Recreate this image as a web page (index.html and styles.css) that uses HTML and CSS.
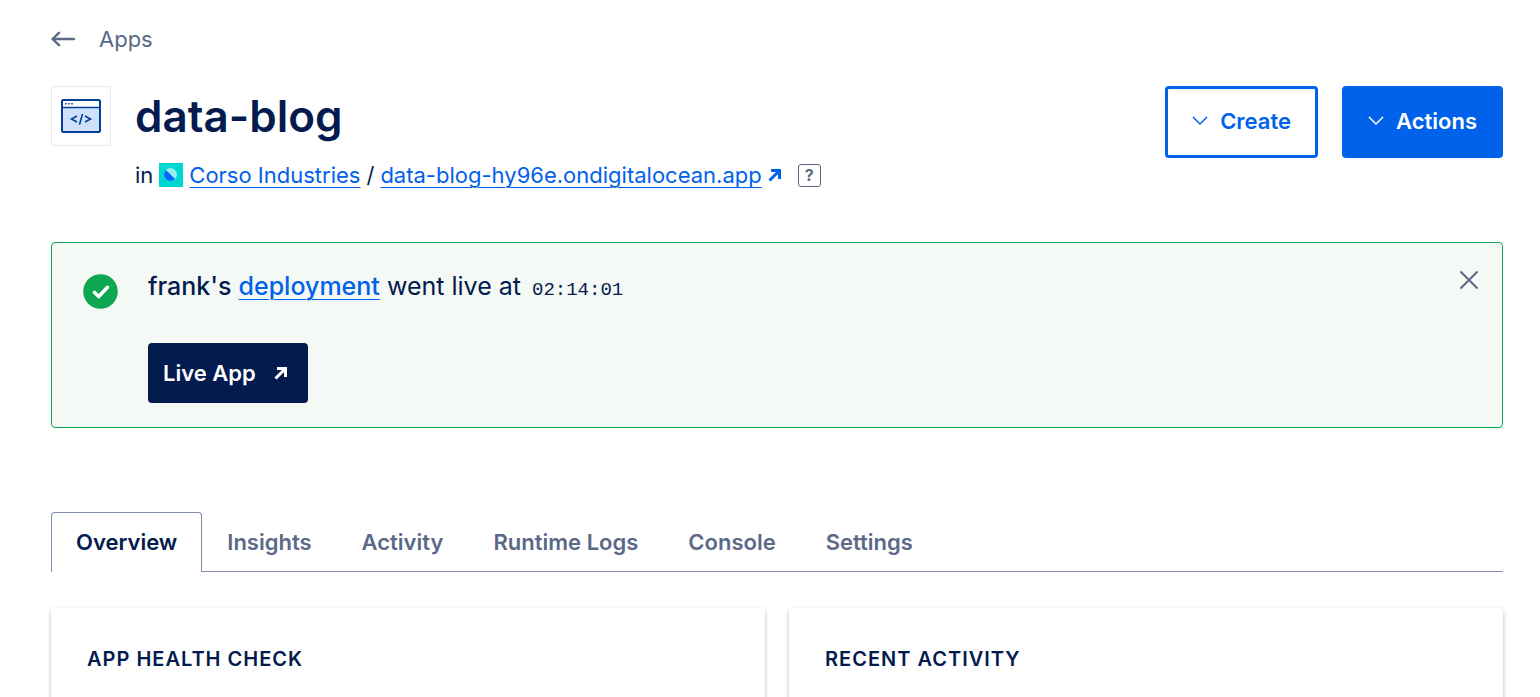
FILE: index.html
```html
<!DOCTYPE html>
<html lang="en">
<head>
<meta charset="utf-8">
<title>data-blog</title>
<link rel="stylesheet" href="styles.css">
</head>
<body>
<div class="page">
  <a class="back" href="#">
    <svg class="back-arrow" viewBox="0 0 24 16" aria-hidden="true"><path d="M23 8H1.500M8 1.800L1.500 8L8 14.200"/></svg>
    <span>Apps</span>
  </a>

  <header class="header">
    <div class="app-icon">
      <svg viewBox="0 0 40 34" aria-hidden="true">
        <rect x="1" y="1" width="38" height="32" rx="1.500" fill="#fff"/>
        <path d="M1 8.500H39V33H1Z" fill="#cfe0fa"/>
        <rect x="1" y="1" width="38" height="32" rx="1.500" fill="none" stroke="#003e9c" stroke-width="2"/>
        <path d="M1 8.500H39" stroke="#003e9c" stroke-width="1.500"/>
        <path d="M4.200 4.700H5.800M7.200 4.700H8.800M10.200 4.700H11.800" stroke="#003e9c" stroke-width="1.400"/>
        <path d="M16 17L10.500 20L16 23M24 17L29.500 20L24 23M21.500 15L18.500 25.500" fill="none" stroke="#003e9c" stroke-width="1.600"/>
      </svg>
    </div>
    <div class="title-block">
      <h1 class="title">data-blog</h1>
      <div class="meta">
        <span>in</span>
        <svg class="project-icon" viewBox="0 0 24 24" aria-hidden="true">
          <rect width="24" height="24" fill="#00d7d2"/>
          <circle cx="11.500" cy="11.500" r="6.500" fill="#99efed"/>
          <path d="M6.900 6.900A6.500 6.500 0 0 0 16.100 16.100Z" fill="#0069ff"/>
        </svg>
        <a class="link" href="#">Corso Industries</a>
        <span>/</span>
        <a class="link" href="#">data-blog-hy96e.ondigitalocean.app</a>
        <svg class="out-arrow" viewBox="0 0 14 14" aria-hidden="true"><path d="M1.500 12.500L11 3M3 2.500H11.500V11"/></svg>
        <button class="help" type="button" aria-label="Help">?</button>
      </div>
    </div>
    <div class="buttons">
      <button class="btn btn-outline" type="button">
        <svg class="chevron" viewBox="0 0 16 10" aria-hidden="true"><path d="M1 1L8 8L15 1"/></svg>Create
      </button>
      <button class="btn btn-primary" type="button">
        <svg class="chevron" viewBox="0 0 16 10" aria-hidden="true"><path d="M1 1L8 8L15 1"/></svg>Actions
      </button>
    </div>
  </header>

  <section class="notice">
    <svg class="check" viewBox="0 0 36 36" aria-hidden="true">
      <circle cx="17.500" cy="17.500" r="17.300" fill="#0ca750"/>
      <path d="M11.500 18.500L15.800 22.500L24.500 13.300" fill="none" stroke="#fff" stroke-width="3.600" stroke-linecap="round"/>
    </svg>
    <div class="notice-body">
      <p class="notice-text"><strong>frank's</strong> <a class="link link-strong" href="#">deployment</a> went live at <time class="time">02:14:01</time></p>
      <a class="live" href="#">Live App
        <svg class="out-arrow" viewBox="0 0 14 14" aria-hidden="true"><path d="M1.500 12.500L11 3M3 2.500H11.500V11"/></svg>
      </a>
    </div>
    <button class="close" type="button" aria-label="Close">
      <svg viewBox="0 0 20 20" aria-hidden="true"><path d="M1.500 1.500L18.500 18.500M18.500 1.500L1.500 18.500"/></svg>
    </button>
  </section>

  <nav class="tabs">
    <a class="tab tab-active" href="#">Overview</a>
    <a class="tab" href="#">Insights</a>
    <a class="tab" href="#">Activity</a>
    <a class="tab" href="#">Runtime Logs</a>
    <a class="tab" href="#">Console</a>
    <a class="tab" href="#">Settings</a>
  </nav>

  <main class="cards">
    <section class="card"><h2 class="card-title">App health check</h2></section>
    <section class="card"><h2 class="card-title">Recent activity</h2></section>
  </main>
</div>
</body>
</html>
```

FILE: styles.css
```css
* { box-sizing: border-box; }

body {
  margin: 0;
  background: #fff;
  color: #031b4e;
  font-family: Inter, "Liberation Sans", sans-serif;
  font-size: 22px;
  line-height: 32px;
  height: 100vh;
  overflow: hidden;
}

.page { padding: 23px 37px 0 51px; }

.back {
  display: inline-flex;
  align-items: center;
  gap: 24px;
  color: #5b6987;
  text-decoration: none;
}
.back-arrow { width: 24px; height: 16px; }
.back-arrow path {
  fill: none;
  stroke: #5b6987;
  stroke-width: 2.400;
  stroke-linecap: round;
  stroke-linejoin: round;
}

.header { display: flex; align-items: flex-start; margin-top: 31px; }
.app-icon {
  display: flex;
  align-items: center;
  justify-content: center;
  width: 60px;
  height: 60px;
  margin-right: 24px;
  border: 1px solid #e5e8ed;
  border-radius: 3px;
}
.app-icon svg { width: 40px; height: 34px; }
.title-block { flex: 1; }
.title {
  margin: 0 0 13px;
  font-size: 44px;
  line-height: 60px;
  font-weight: 600;
}
.meta { display: flex; align-items: center; gap: 6px; }
.project-icon { width: 24px; height: 24px; }

.link {
  color: #0061eb;
  text-decoration: underline;
  text-decoration-thickness: 1px;
  text-underline-offset: 4px;
}
.link-strong { font-weight: 500; }

.out-arrow { width: 14px; height: 14px; }
.out-arrow path { fill: none; stroke: #0061eb; stroke-width: 3; }

.help {
  width: 23px;
  height: 23px;
  margin-left: 10px;
  padding: 0;
  border: 1px solid #5b6987;
  border-radius: 3px;
  background: #fff;
  color: #5b6987;
  font: 700 16px/20px Inter, sans-serif;
}

.buttons { display: flex; gap: 24px; }
.btn {
  display: flex;
  align-items: center;
  gap: 12px;
  height: 72px;
  padding: 0 23px 2px;
  border: 3px solid #0061eb;
  border-radius: 4px;
  font: 600 22px/32px Inter, sans-serif;
}
.btn-outline { padding: 0 24px 2px; background: #fff; color: #0061eb; }
.btn-primary { background: #0061eb; color: #fff; }
.chevron { width: 16px; height: 10px; }
.chevron path { fill: none; stroke: currentColor; stroke-width: 1.500; }

.notice {
  display: flex;
  align-items: flex-start;
  margin-top: 51px;
  padding: 23px 23px 24px 31px;
  border: 1px solid #0ca750;
  border-radius: 4px;
  background: #f4f9f5;
}
.check { width: 36px; height: 36px; margin: 8px 29px 0 0; }
.notice-body { flex: 1; }
.notice-text { margin: 0 0 37px; font-size: 25px; line-height: 40px; }
.notice-text strong { font-weight: 500; }
.time { margin-left: 4px; font: 19px "Liberation Mono", monospace; }
.live {
  display: inline-flex;
  align-items: center;
  gap: 18px;
  height: 60px;
  padding: 0 20px 0 15px;
  border-radius: 4px;
  background: #031b4e;
  color: #fff;
  font-weight: 600;
  text-decoration: none;
  vertical-align: top;
}
.live .out-arrow path { stroke: #fff; }
.close {
  display: flex;
  margin-top: 4px;
  padding: 0;
  border: 0;
  background: none;
}
.close svg { width: 20px; height: 20px; }
.close path { stroke: #5b6987; stroke-width: 2; }

.tabs {
  display: flex;
  margin-top: 84px;
  box-shadow: inset 0 -1px #7f8dae;
}
.tab {
  height: 60px;
  padding: 13px 24px;
  border: 1px solid transparent;
  border-bottom: 0;
  color: #5b6987;
  font-weight: 600;
  text-decoration: none;
}
.tab-active {
  border-color: #7f8dae;
  border-radius: 4px 4px 0 0;
  background: #fff;
  color: #031b4e;
}

.cards {
  display: grid;
  grid-template-columns: 1fr 1fr;
  gap: 24px;
  margin-top: 36px;
}
.card {
  padding: 35px 36px;
  border-radius: 4px;
  background: #fff;
  box-shadow: 0 2px 4px rgba(3, 27, 78, 0.3);
}
.card-title {
  margin: 0;
  font-size: 20px;
  line-height: 32px;
  font-weight: 600;
  letter-spacing: 1px;
  text-transform: uppercase;
}
```
